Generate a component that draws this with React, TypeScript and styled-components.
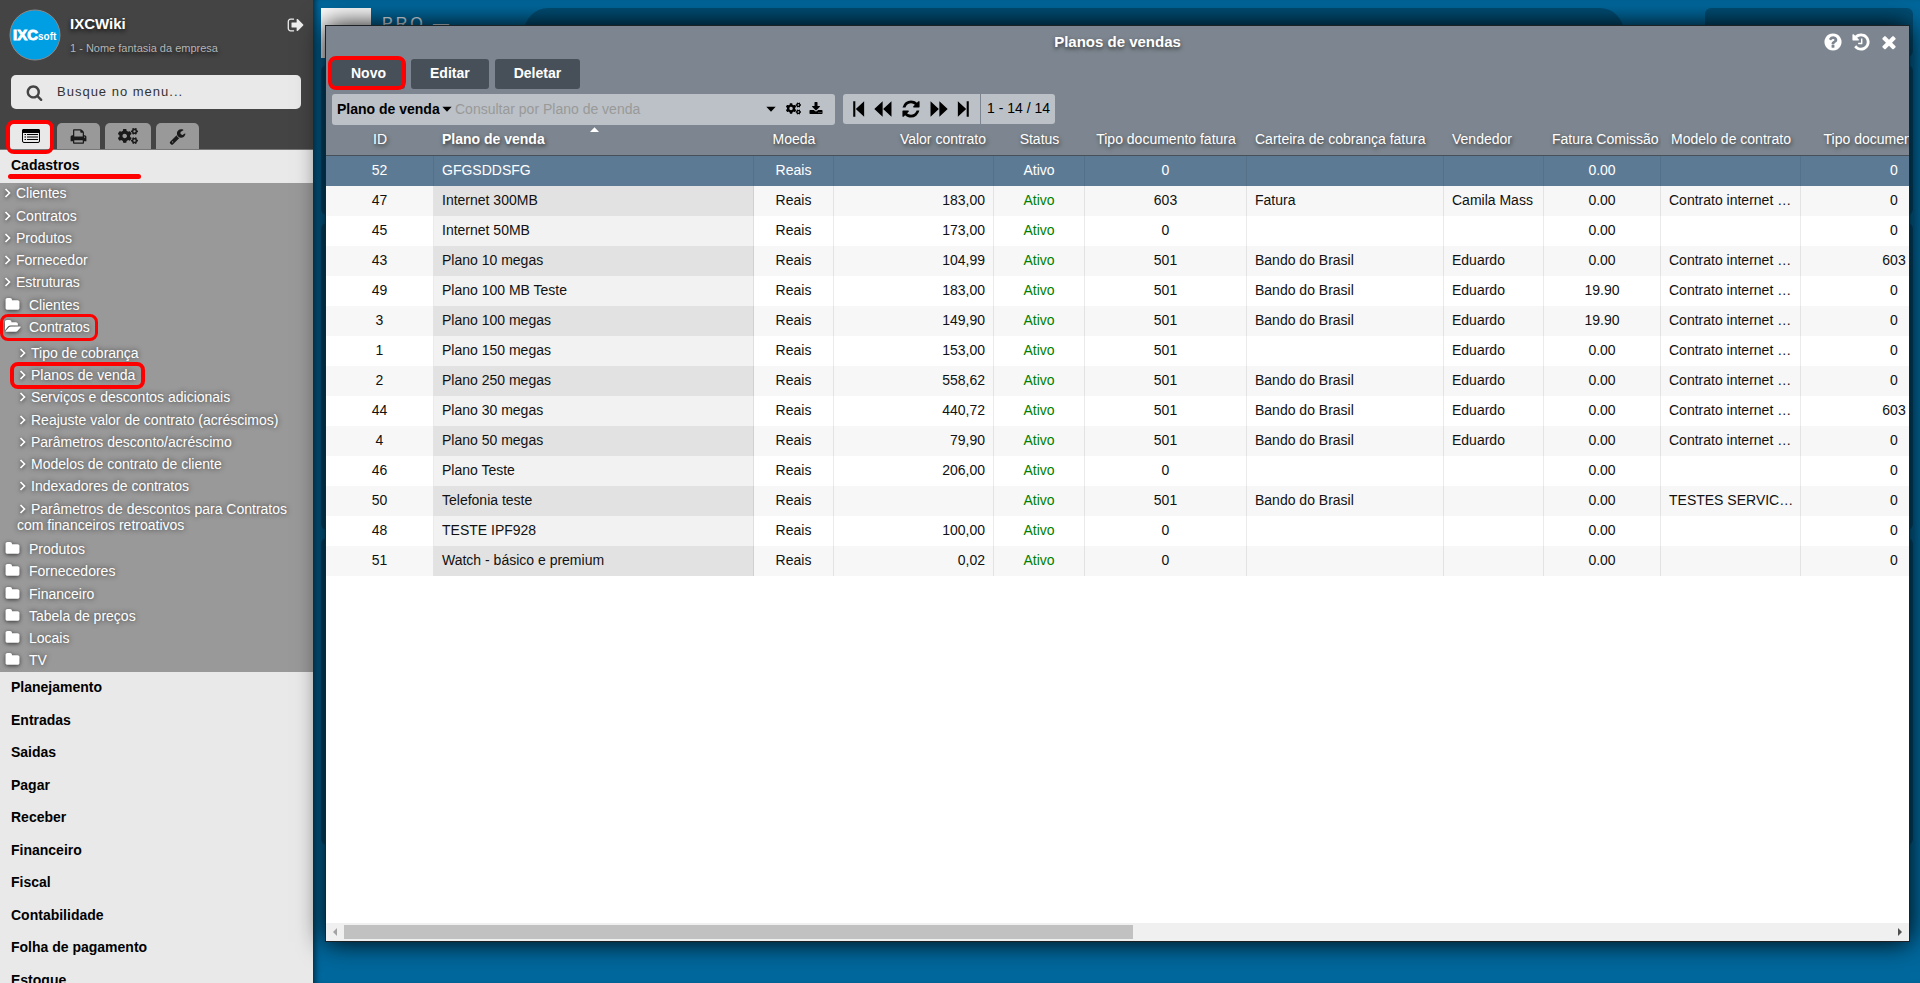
import React, { useState } from "react";
import styled, { createGlobalStyle, css } from "styled-components";
import { FaCogs } from "react-icons/fa";

const GlobalStyle = createGlobalStyle`
  *, *::before, *::after { box-sizing: border-box; }
  html, body, #root { height: 100%; }
  body {
    margin: 0;
    overflow: hidden;
    font-family: "Liberation Sans", Arial, sans-serif;
    font-size: 14px;
    line-height: 16px;
    color: #111;
    background: #00689d;
  }
  button, input, select { font: inherit; color: inherit; }
  button { border: 0; padding: 0; background: none; cursor: pointer; }
  ul { list-style: none; margin: 0; padding: 0; }
  a { color: inherit; text-decoration: none; }
`;

/* ---------- icons ---------- */

const paths = {
  print:
    "M448 1536h896v-256h-896v256zm0-640h896v-384h-160q-40 0-68-28t-28-68v-160h-640v640zm1152 64q0-26-19-45t-45-19-45 19-19 45 19 45 45 19 45-19 19-45zm128 0v416q0 13-9.500 22.500t-22.500 9.500h-224v160q0 40-28 68t-68 28h-960q-40 0-68-28t-28-68v-160h-224q-13 0-22.500-9.500t-9.500-22.500v-416q0-79 56.500-135.500t135.500-56.500h64v-544q0-40 28-68t68-28h672q40 0 88 20t76 48l152 152q28 28 48 76t20 88v256h64q79 0 135.500 56.500t56.500 135.500z",
  refresh:
    "M1639 1056q0 5-1 7-64 268-268 434.500t-478 166.500q-146 0-282.500-55t-243.500-157l-129 129q-19 19-45 19t-45-19-19-45v-448q0-26 19-45t45-19h448q26 0 45 19t19 45-19 45l-137 137q71 66 161 102t187 36q134 0 250-65t186-179q11-17 53-117 8-23 30-23h192q13 0 22.500 9.500t9.500 22.500zm25-800v448q0 26-19 45t-45 19h-448q-26 0-45-19t-19-45 19-45l138-138q-148-137-349-137-134 0-250 65t-186 179q-11 17-53 117-8 23-30 23h-199q-13 0-22.500-9.500t-9.500-22.500v-7q65-268 270-434.500t480-166.500q146 0 284 55.500t245 156.500l130-129q19-19 45-19t45 19 19 45z",
  signOut:
    "M704 1440q0 4 1 20t.5 26.500-3 23.500-10 19.500-20.500 6.500h-320q-119 0-203.500-84.500t-84.500-203.500v-704q0-119 84.500-203.500t203.500-84.500h320q13 0 22.500 9.500t9.500 22.500q0 4 1 20t.5 26.500-3 23.500-10 19.500-20.500 6.500h-320q-66 0-113 47t-47 113v704q0 66 47 113t113 47h312l11.500 1 11.500 3 8 5.500 7 9 2 13.500zm928-544q0 26-19 45l-544 544q-19 19-45 19t-45-19-19-45v-288h-448q-26 0-45-19t-19-45v-384q0-26 19-45t45-19h448v-288q0-26 19-45t45-19 45 19l544 544q19 19 19 45z",
  folder:
    "M1728 608v704q0 92-66 158t-158 66h-1216q-92 0-158-66t-66-158v-960q0-92 66-158t158-66h320q92 0 158 66t66 158v32h672q92 0 158 66t66 158z",
  folderOpen:
    "M1879 952q0 31-31 66l-336 396q-43 51-120.500 86.500t-143.500 35.500h-1088q-34 0-60.500-13t-26.500-43q0-31 31-66l336-396q43-51 120.500-86.500t143.500-35.500h1088q34 0 60.500 13t26.500 43zm-343-344v160h-832q-94 0-197 47.500t-164 119.500l-337 396-5 6q0-4-.5-12.500t-.5-12.500v-960q0-92 66-158t158-66h320q92 0 158 66t66 158v32h544q92 0 158 66t66 158z",
  search:
    "M1216 832q0-185-131.500-316.500t-316.500-131.500-316.500 131.500-131.500 316.500 131.500 316.500 316.500 131.500 316.500-131.500 131.500-316.500zm512 832q0 52-38 90t-90 38q-54 0-90-38l-343-342q-179 124-399 124-143 0-273.500-55.500t-225-150-150-225-55.500-273.500 55.500-273.500 150-225 225-150 273.500-55.500 273.500 55.500 225 150 150 225 55.500 273.500q0 220-124 399l343 343q37 37 37 90z",
  help:
    "M1024 1376v-192q0-14-9-23t-23-9h-192q-14 0-23 9t-9 23v192q0 14 9 23t23 9h192q14 0 23-9t9-23zm256-672q0-88-55.500-163t-138.500-116-170-41q-243 0-371 213-15 24 8 42l132 100q7 6 19 6 16 0 25-12 53-68 86-92 34-24 86-24 48 0 85.500 26t37.500 59q0 38-20 61t-68 45q-63 28-115.500 86.500t-52.500 125.500v36q0 14 9 23t23 9h192q14 0 23-9t9-23q0-19 21.500-49.500t54.500-49.500q32-18 49-28.500t46-35 44.500-48 28-60.500 12.500-81zm384 192q0 209-103 385.500t-279.500 279.500-385.500 103-385.500-103-279.500-279.500-103-385.500 103-385.500 279.500-279.500 385.500-103 385.500 103 279.500 279.500 103 385.500z",
  history:
    "M1664 896q0 156-61 298t-164 245-245 164-298 61q-172 0-327-72.500t-264-204.500q-7-10-6.500-22.500t8.500-20.500l137-138q10-9 25-9 16 2 23 12 73 95 179 147t225 52q104 0 198.500-40.500t163.500-109.500 109.500-163.500 40.500-198.500-40.500-198.500-109.500-163.500-163.500-109.500-198.500-40.500q-98 0-188 35.500t-160 101.500l137 138q31 30 14 69-17 40-59 40h-448q-26 0-45-19t-19-45v-448q0-42 40-59 39-17 69 14l130 129q107-101 244.500-156.500t284.500-55.500q156 0 298 61t245 164 164 245 61 298zm-640-288v448q0 14-9 23t-23 9h-320q-14 0-23-9t-9-23v-64q0-14 9-23t23-9h224v-352q0-14 9-23t23-9h64q14 0 23 9t9 23z",
  close:
    "M1490 1322q0 40-28 68l-136 136q-28 28-68 28t-68-28l-294-294-294 294q-28 28-68 28t-68-28l-136-136q-28-28-28-68t28-68l294-294-294-294q-28-28-28-68t28-68l136-136q28-28 68-28t68 28l294 294 294-294q28-28 68-28t68 28l136 136q28 28 28 68t-28 68l-294 294 294 294q28 28 28 68z",
  wrench:
    "M448 1472q0-26-19-45t-45-19-45 19-19 45 19 45 45 19 45-19 19-45zm644-420l-682 682q-37 37-90 37-52 0-91-37l-106-108q-38-36-38-90 0-53 38-91l681-681q39 98 114.500 173.500t173.500 114.500zm634-435q0 39-23 106-47 134-164.500 217.500t-258.500 83.500q-185 0-316.500-131.500t-131.500-316.500 131.500-316.500 316.500-131.500q58 0 121.500 16.500t107.500 46.500q16 11 16 28t-16 28l-293 169v224l193 107q5-3 79-48.500t135.500-81 70.500-35.500q15 0 23.500 10t8.500 25z",
  download:
    "M1344 1344q0-26-19-45t-45-19-45 19-19 45 19 45 45 19 45-19 19-45zm256 0q0-26-19-45t-45-19-45 19-19 45 19 45 45 19 45-19 19-45zm128-224v320q0 40-28 68t-68 28h-1472q-40 0-68-28t-28-68v-320q0-40 28-68t68-28h465l135 136q58 56 136 56t136-56l136-136h464q40 0 68 28t28 68zm-325-569q17 41-14 70l-448 448q-18 19-45 19t-45-19l-448-448q-31-29-14-70 17-39 59-39h256v-448q0-26 19-45t45-19h256q26 0 45 19t19 45v448h256q42 0 59 39z",
  stepBack: "M320 128h210v1536h-210zM1408 128v1536l-830-768z",
  stepForward: "M1262 128h210v1536h-210zM384 128v1536l830-768z",
  backward: "M860 128v1536l-830-768zM1740 128v1536l-830-768z",
  forward: "M52 128v1536l830-768zM932 128v1536l830-768z",
  caret: "M300 620h1192l-596 620z",
  caretUp: "M0 1400h1792l-896-960z",
};

const Icon = ({ name, size = 16 }: { name: keyof typeof paths; size?: number }) => (
  <svg width={size} height={size} viewBox="0 0 1792 1792" fill="currentColor" overflow="visible" aria-hidden="true">
    <path d={paths[name]} />
  </svg>
);

const Chevron = () => (
  <svg width="8" height="10" viewBox="0 0 8 10" fill="none" stroke="currentColor" strokeWidth="1.700" aria-hidden="true">
    <path d="M1.500 1l4 4-4 4" />
  </svg>
);

const ListIcon = () => (
  <svg width="18" height="14" viewBox="0 0 18 14" aria-hidden="true">
    <rect x="0.500" y="0.500" width="17" height="13" rx="1.500" fill="none" stroke="currentColor" />
    <rect x="0" y="0" width="18" height="4" rx="1.500" fill="currentColor" />
    <path d="M2.500 5.500h1.500M2.500 8h1.500M2.500 10.500h1.500M5 5.500h11M5 8h11M5 10.500h11" stroke="currentColor" strokeWidth="1.200" />
  </svg>
);

const Logo = () => (
  <svg width="52" height="52" viewBox="0 0 52 52" role="img" aria-label="IXCsoft">
    <circle cx="26" cy="26" r="25" fill="#009fe3" stroke="#8a8a8a" />
    <text x="4" y="31" fontSize="15" fontWeight="700" fill="#fff" stroke="#fff" strokeWidth="0.900">IXC</text>
    <text x="29" y="31" fontSize="10" fontWeight="700" fill="#fff">soft</text>
  </svg>
);

/* ---------- page ---------- */

const Page = styled.div`
  display: flex;
  height: 100vh;
  overflow: hidden;
`;

const Highlight = styled.span<{ $inset: string; $weight?: number }>`
  position: absolute;
  inset: ${(p) => p.$inset};
  border: ${(p) => p.$weight ?? 3}px solid #f00;
  border-radius: 8px;
  pointer-events: none;
  z-index: 1;
`;

const Underline = styled.span`
  position: absolute;
  left: 8px;
  bottom: 4px;
  width: 133px;
  height: 5px;
  border-radius: 3px;
  background: #f00;
`;

/* ---------- sidebar ---------- */

const Sidebar = styled.aside`
  flex: 0 0 313px;
  display: flex;
  flex-direction: column;
  overflow: hidden;
  background: #e9e9e9;
`;

const SideHead = styled.header`
  flex: none;
  display: flex;
  flex-direction: column;
  background: #444;
  border-bottom: 1px solid #777;
`;

const Profile = styled.div`
  display: flex;
  align-items: flex-start;
  gap: 9px;
  padding: 9px 8px 14px 9px;
`;

const ProfileText = styled.div`
  flex: 1;
  display: flex;
  flex-direction: column;
  gap: 9px;
  padding-top: 6px;
  text-shadow: 0 2px 4px #111;
`;

const UserName = styled.strong`
  font-size: 15px;
  line-height: 18px;
  color: #fff;
`;

const Company = styled.span`
  font-size: 11px;
  line-height: 12px;
  color: #b5b5b5;
`;

const LogoutButton = styled.button`
  display: flex;
  padding-top: 7px;
  color: #eee;
`;

const SearchBox = styled.label`
  display: flex;
  align-items: center;
  gap: 14px;
  height: 34px;
  margin: 0 12px 14px 11px;
  padding: 0 15px;
  border-radius: 5px;
  background: #e9e9e9;
  color: #444;
`;

const SearchInput = styled.input`
  flex: 1;
  min-width: 0;
  border: 0;
  outline: 0;
  padding: 0;
  background: none;
  font-size: 13px;
  letter-spacing: 1px;
  &::placeholder { color: #333; opacity: 1; }
`;

const Tabs = styled.div`
  display: flex;
  gap: 5px;
  padding-left: 10px;
`;

const Tab = styled.button<{ $active?: boolean; $width?: number }>`
  position: relative;
  display: flex;
  align-items: center;
  justify-content: center;
  width: ${(p) => p.$width ?? 43}px;
  height: 26px;
  border-radius: 5px 5px 0 0;
  background: ${(p) => (p.$active ? "#e9e9e9" : "#999")};
  color: ${(p) => (p.$active ? "#000" : "#1a1a1a")};
`;

const Section = styled.a`
  position: relative;
  display: block;
  padding: 7px 11px 10px;
  font-weight: 700;
  color: #000;
`;

const Tree = styled.ul`
  background: #999;
  color: #fff;
  text-shadow: 0 0 5px #333;
  & > li:nth-child(4n + 2) { padding-top: 1px; }
`;

const SubTree = styled.ul`
  padding: 4px 0 2px 17px;
  & > li:nth-child(4n) { padding-top: 1px; }
`;

const TreeLink = styled.a<{ $folder?: boolean }>`
  position: relative;
  display: block;
  width: fit-content;
  max-width: 290px;
  padding: 2px 0 4px;
  padding-left: ${(p) => (p.$folder ? 5 : 4)}px;
  svg {
    margin-right: ${(p) => (p.$folder ? 9 : 4)}px;
    vertical-align: ${(p) => (p.$folder ? "top" : "baseline")};
    filter: drop-shadow(0 1px 2px #333);
  }
`;

const SubLink = styled(TreeLink)`
  padding-left: 0;
  svg { margin-left: 2px; margin-right: 4px; }
`;

const Sections = styled.nav`
  display: flex;
  flex-direction: column;
  & > a:nth-child(even) { padding-bottom: 9px; }
`;

const quickLinks = ["Clientes", "Contratos", "Produtos", "Fornecedor", "Estruturas"];
const folders = ["Clientes", "Contratos", "Produtos", "Fornecedores", "Financeiro", "Tabela de preços", "Locais", "TV"];
const contractLinks = [
  "Tipo de cobrança",
  "Planos de venda",
  "Serviços e descontos adicionais",
  "Reajuste valor de contrato (acréscimos)",
  "Parâmetros desconto/acréscimo",
  "Modelos de contrato de cliente",
  "Indexadores de contratos",
  "Parâmetros de descontos para Contratos com financeiros retroativos",
];
const sections = [
  "Planejamento", "Entradas", "Saidas", "Pagar", "Receber",
  "Financeiro", "Fiscal", "Contabilidade", "Folha de pagamento", "Estoque",
];

const SideMenu = () => (
  <Sidebar>
    <SideHead>
      <Profile>
        <Logo />
        <ProfileText>
          <UserName>IXCWiki</UserName>
          <Company>1 - Nome fantasia da empresa</Company>
        </ProfileText>
        <LogoutButton aria-label="Sair"><Icon name="signOut" size={18} /></LogoutButton>
      </Profile>
      <SearchBox>
        <Icon name="search" size={17} />
        <SearchInput aria-label="Busque no menu" placeholder="Busque no menu..." />
      </SearchBox>
      <Tabs>
        <Tab $active $width={42} aria-label="Menu">
          <ListIcon />
          <Highlight $inset="-3px -2px -5px -4px" $weight={4} />
        </Tab>
        <Tab aria-label="Relatórios"><Icon name="print" size={17} /></Tab>
        <Tab $width={46} aria-label="Configurações"><FaCogs size={20} /></Tab>
        <Tab aria-label="Ferramentas"><Icon name="wrench" size={17} /></Tab>
      </Tabs>
    </SideHead>
    <Section href="#cadastros">
      Cadastros
      <Underline />
    </Section>
    <Tree>
      {quickLinks.map((label) => (
        <li key={label}>
          <TreeLink href="#"><Chevron />{label}</TreeLink>
        </li>
      ))}
      {folders.map((label) => {
        const open = label === "Contratos";
        return (
          <li key={label}>
            <TreeLink href="#" $folder>
              <Icon name={open ? "folderOpen" : "folder"} size={15} />
              {label}
              {open && <Highlight $inset="-3px -8px -2px 0" />}
            </TreeLink>
            {open && (
              <SubTree>
                {contractLinks.map((sub) => (
                  <li key={sub}>
                    <SubLink href="#">
                      <Chevron />
                      {sub}
                      {sub === "Planos de venda" && <Highlight $inset="-3px -10px -2px -7px" $weight={4} />}
                    </SubLink>
                  </li>
                ))}
              </SubTree>
            )}
          </li>
        );
      })}
    </Tree>
    <Sections>
      {sections.map((label) => (
        <Section key={label} href="#">{label}</Section>
      ))}
    </Sections>
  </Sidebar>
);

/* ---------- desktop behind the window ---------- */

const Desktop = styled.main`
  position: relative;
  flex: 1;
  min-width: 0;
  background: #00689d;
  box-shadow: inset 6px 0 6px -4px rgba(0, 0, 0, 0.6);
`;

const Backdrop = styled.div`
  display: flex;
  flex-direction: column;
  gap: 8px;
  padding: 8px 7px 0 8px;
`;

const BackdropTop = styled.div`
  display: flex;
  align-items: flex-start;
  height: 49px;
`;

const BrandTile = styled.div`
  width: 50px;
  height: 50px;
  margin-right: 11px;
  background: #fff;
`;

const BrandText = styled.span`
  width: 142px;
  padding-top: 8px;
  letter-spacing: 3px;
  font-size: 16px;
  color: #e4eef5;
`;

const BackdropSearch = styled.div`
  flex: 1;
  height: 49px;
  margin-right: 81px;
  border-radius: 25px;
  background: rgba(0, 0, 0, 0.25);
`;

const BackdropCard = styled.div`
  width: 208px;
  height: 49px;
  border-radius: 6px;
  background: rgba(0, 0, 0, 0.25);
`;

const BackdropPanel = styled.div<{ $height: number }>`
  height: ${(p) => p.$height}px;
  border-radius: 6px;
  background: rgba(0, 0, 0, 0.25);
`;

/* ---------- window ---------- */

const Window = styled.section`
  position: absolute;
  inset: 25px 10px 41px 12px;
  display: flex;
  flex-direction: column;
  border: 1px solid #1c2226;
  background: #fff;
  box-shadow: 0 0 25px #000;
`;

const WindowHead = styled.header`
  background: #7d8690;
`;

const TitleBar = styled.div`
  display: grid;
  grid-template-columns: 1fr auto 1fr;
  align-items: center;
  height: 31px;
  padding: 0 10px;
  color: #fff;
`;

const Title = styled.h1`
  grid-column: 2;
  margin: 0;
  font-size: 15px;
  line-height: 18px;
  font-weight: 700;
  text-shadow: 0 2px 4px #333;
`;

const TitleActions = styled.div`
  display: flex;
  justify-content: flex-end;
  gap: 8px;
  button { display: flex; color: #fff; }
`;

const ActionRow = styled.div`
  display: flex;
  gap: 6px;
  padding: 2px 6px 5px;
`;

const ActionButton = styled.button`
  position: relative;
  height: 30px;
  padding: 0 19px 2px;
  border-radius: 3px;
  background: #475059;
  color: #fff;
  font-weight: 700;
`;

const FilterRow = styled.div`
  display: flex;
  align-items: flex-start;
  gap: 8px;
  padding: 0 6px;
`;

const Filter = styled.div`
  display: flex;
  align-items: center;
  width: 503px;
  height: 31px;
  padding: 0 12px 2px 5px;
  border-radius: 3px;
  background: #bbc1c6;
  color: #000;
`;

const FieldSelect = styled.select`
  appearance: none;
  border: 0;
  outline: 0;
  padding: 0;
  background: none;
  font-weight: 700;
  color: #000;
`;

const FilterInput = styled.input`
  flex: 1;
  min-width: 0;
  margin-left: 1px;
  border: 0;
  outline: 0;
  padding: 0;
  background: none;
  &::placeholder { color: #999; opacity: 1; }
`;

const FilterActions = styled.div`
  display: flex;
  align-items: center;
  gap: 8px;
  button { display: flex; }
`;

const Pager = styled.div`
  display: flex;
  height: 30px;
  border-radius: 3px;
  overflow: hidden;
  background: #bbc1c6;
  color: #000;
`;

const PagerButtons = styled.div`
  display: flex;
  align-items: center;
  gap: 6px;
  padding: 0 8px 0 7px;
`;

const PagerButton = styled.button<{ $wide?: boolean }>`
  display: flex;
  padding: 0 ${(p) => (p.$wide ? 3 : 0)}px;
`;

const PagerInfo = styled.span`
  padding: 6px 5px 0 6px;
  border-left: 1px solid #7d8690;
`;

const GridArea = styled.div`
  flex: 1;
  min-height: 0;
  overflow: hidden;
`;

const Grid = styled.table`
  width: 1662px;
  table-layout: fixed;
  border-collapse: separate;
  border-spacing: 0;
`;

type Align = "left" | "center" | "right";

const HeadCell = styled.th<{ $align: Align; $sorted?: boolean }>`
  position: relative;
  height: 31px;
  padding: 0 8px 2px;
  border-bottom: 1px solid #475059;
  background: #7d8690;
  color: #fff;
  font-weight: ${(p) => (p.$sorted ? 700 : 400)};
  text-align: ${(p) => p.$align};
  text-shadow: 1px 2px 4px #333;
  white-space: nowrap;
`;

const SortMark = styled.span`
  position: absolute;
  top: 0;
  left: 0;
  right: 0;
  display: flex;
  justify-content: center;
`;

const Cell = styled.td<{ $align: Align; $sorted?: boolean; $green?: boolean }>`
  height: 30px;
  padding: 0 ${(p) => (p.$align === "left" ? 6 : 8)}px 2px 8px;
  border-right: 1px solid rgba(0, 0, 0, 0.08);
  overflow: hidden;
  text-overflow: ellipsis;
  white-space: nowrap;
  text-align: ${(p) => p.$align};
  ${(p) => p.$green && css`color: #008000;`}
  ${(p) => p.$sorted && css`background: rgba(0, 0, 0, 0.05);`}
`;

const Row = styled.tr<{ $selected?: boolean }>`
  background: #fff;
  &:nth-child(even) { background: #f7f7f7; }
  &:nth-child(even) ${Cell}:nth-child(2) { background: #e2e2e2; }
  ${(p) => p.$selected && css`
    && { background: #5d7a95; }
    && ${Cell} { background: none; color: #fff; }
  `}
`;

const ScrollBar = styled.div`
  display: flex;
  align-items: center;
  height: 18px;
  background: #f0f0f0;
`;

const ScrollArrow = styled.button<{ $off?: boolean }>`
  display: flex;
  align-items: center;
  justify-content: center;
  width: 18px;
  height: 18px;
  color: ${(p) => (p.$off ? "#a3a3a3" : "#505050")};
`;

const ScrollTrack = styled.div`
  flex: 1;
`;

const ScrollThumb = styled.div`
  width: 51%;
  height: 14px;
  background: #c1c1c1;
`;

const columns: { label: string; width: number; align: Align; head?: Align }[] = [
  { label: "ID", width: 108, align: "center" },
  { label: "Plano de venda", width: 320, align: "left" },
  { label: "Moeda", width: 80, align: "center" },
  { label: "Valor contrato", width: 160, align: "right" },
  { label: "Status", width: 91, align: "center" },
  { label: "Tipo documento fatura", width: 162, align: "center" },
  { label: "Carteira de cobrança fatura", width: 197, align: "left" },
  { label: "Vendedor", width: 100, align: "left" },
  { label: "Fatura Comissão", width: 117, align: "center" },
  { label: "Modelo de contrato", width: 140, align: "left", head: "center" },
  { label: "Tipo documento boleto", width: 187, align: "center" },
];

const internet = "Contrato internet residencial";

const rows: string[][] = [
  ["52", "GFGSDDSFG", "Reais", "", "Ativo", "0", "", "", "0.00", "", "0"],
  ["47", "Internet 300MB", "Reais", "183,00", "Ativo", "603", "Fatura", "Camila Mass", "0.00", internet, "0"],
  ["45", "Internet 50MB", "Reais", "173,00", "Ativo", "0", "", "", "0.00", "", "0"],
  ["43", "Plano 10 megas", "Reais", "104,99", "Ativo", "501", "Bando do Brasil", "Eduardo", "0.00", internet, "603"],
  ["49", "Plano 100 MB Teste", "Reais", "183,00", "Ativo", "501", "Bando do Brasil", "Eduardo", "19.90", internet, "0"],
  ["3", "Plano 100 megas", "Reais", "149,90", "Ativo", "501", "Bando do Brasil", "Eduardo", "19.90", internet, "0"],
  ["1", "Plano 150 megas", "Reais", "153,00", "Ativo", "501", "", "Eduardo", "0.00", internet, "0"],
  ["2", "Plano 250 megas", "Reais", "558,62", "Ativo", "501", "Bando do Brasil", "Eduardo", "0.00", internet, "0"],
  ["44", "Plano 30 megas", "Reais", "440,72", "Ativo", "501", "Bando do Brasil", "Eduardo", "0.00", internet, "603"],
  ["4", "Plano 50 megas", "Reais", "79,90", "Ativo", "501", "Bando do Brasil", "Eduardo", "0.00", internet, "0"],
  ["46", "Plano Teste", "Reais", "206,00", "Ativo", "0", "", "", "0.00", "", "0"],
  ["50", "Telefonia teste", "Reais", "", "Ativo", "501", "Bando do Brasil", "", "0.00", "TESTES SERVICOS", "0"],
  ["48", "TESTE IPF928", "Reais", "100,00", "Ativo", "0", "", "", "0.00", "", "0"],
  ["51", "Watch - básico e premium", "Reais", "0,02", "Ativo", "0", "", "", "0.00", "", "0"],
];

const PlansGrid = () => {
  const [selected, setSelected] = useState("52");
  return (
    <GridArea>
      <Grid>
        <colgroup>
          {columns.map((c) => <col key={c.label} width={c.width} />)}
        </colgroup>
        <thead>
          <tr>
            {columns.map((c, i) => (
              <HeadCell key={c.label} scope="col" $align={c.head ?? c.align} $sorted={i === 1}>
                {i === 1 && <SortMark><Icon name="caretUp" size={9} /></SortMark>}
                {c.label}
              </HeadCell>
            ))}
          </tr>
        </thead>
        <tbody>
          {rows.map((row) => (
            <Row key={row[0]} $selected={row[0] === selected} onClick={() => setSelected(row[0])}>
              {row.map((value, i) => (
                <Cell key={i} $align={columns[i].align} $sorted={i === 1} $green={i === 4}>{value}</Cell>
              ))}
            </Row>
          ))}
        </tbody>
      </Grid>
    </GridArea>
  );
};

const PlansWindow = () => (
  <Window>
    <WindowHead>
      <TitleBar>
        <Title>Planos de vendas</Title>
        <TitleActions>
          <button aria-label="Ajuda"><Icon name="help" size={20} /></button>
          <button aria-label="Histórico"><Icon name="history" size={20} /></button>
          <button aria-label="Fechar"><Icon name="close" size={20} /></button>
        </TitleActions>
      </TitleBar>
      <ActionRow>
        <ActionButton>
          Novo
          <Highlight $inset="-3px -1px -1px -4px" $weight={4} />
        </ActionButton>
        <ActionButton>Editar</ActionButton>
        <ActionButton>Deletar</ActionButton>
      </ActionRow>
      <FilterRow>
        <Filter>
          <FieldSelect aria-label="Campo de consulta">
            <option>Plano de venda</option>
          </FieldSelect>
          <Icon name="caret" size={14} />
          <FilterInput aria-label="Consultar" placeholder="Consultar por Plano de venda" />
          <FilterActions>
            <button aria-label="Opções"><Icon name="caret" size={14} /></button>
            <button aria-label="Configurar"><FaCogs size={15} /></button>
            <button aria-label="Exportar"><Icon name="download" size={14} /></button>
          </FilterActions>
        </Filter>
        <Pager>
          <PagerButtons>
            <PagerButton aria-label="Primeira página"><Icon name="stepBack" size={18} /></PagerButton>
            <PagerButton aria-label="Página anterior"><Icon name="backward" size={18} /></PagerButton>
            <PagerButton $wide aria-label="Atualizar"><Icon name="refresh" size={20} /></PagerButton>
            <PagerButton aria-label="Próxima página"><Icon name="forward" size={18} /></PagerButton>
            <PagerButton aria-label="Última página"><Icon name="stepForward" size={18} /></PagerButton>
          </PagerButtons>
          <PagerInfo>1 - 14 / 14</PagerInfo>
        </Pager>
      </FilterRow>
    </WindowHead>
    <PlansGrid />
    <ScrollBar>
      <ScrollArrow $off aria-label="Rolar para a esquerda">
        <svg width="4" height="8" viewBox="0 0 4 8" fill="currentColor"><path d="M4 0v8L0 4z" /></svg>
      </ScrollArrow>
      <ScrollTrack><ScrollThumb /></ScrollTrack>
      <ScrollArrow aria-label="Rolar para a direita">
        <svg width="4" height="8" viewBox="0 0 4 8" fill="currentColor"><path d="M0 0v8l4-4z" /></svg>
      </ScrollArrow>
    </ScrollBar>
  </Window>
);

export default function App() {
  return (
    <Page>
      <GlobalStyle />
      <SideMenu />
      <Desktop>
        <Backdrop>
          <BackdropTop>
            <BrandTile />
            <BrandText>PRO —</BrandText>
            <BackdropSearch />
            <BackdropCard />
          </BackdropTop>
          <BackdropPanel $height={150} />
          <BackdropPanel $height={307} />
          <BackdropPanel $height={307} />
        </Backdrop>
        <PlansWindow />
      </Desktop>
    </Page>
  );
}
